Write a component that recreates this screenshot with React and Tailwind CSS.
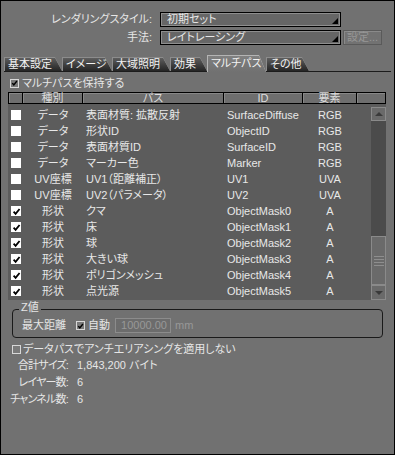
import React from "react";

const rows = [
  [false, "データ", "表面材質: 拡散反射", "SurfaceDiffuse", "RGB"],
  [false, "データ", "形状ID", "ObjectID", "RGB"],
  [false, "データ", "表面材質ID", "SurfaceID", "RGB"],
  [false, "データ", "マーカー色", "Marker", "RGB"],
  [false, "UV座標", "UV1（距離補正）", "UV1", "UVA"],
  [false, "UV座標", "UV2（パラメータ）", "UV2", "UVA"],
  [true, "形状", "クマ", "ObjectMask0", "A"],
  [true, "形状", "床", "ObjectMask1", "A"],
  [true, "形状", "球", "ObjectMask2", "A"],
  [true, "形状", "大きい球", "ObjectMask3", "A"],
  [true, "形状", "ポリゴンメッシュ", "ObjectMask4", "A"],
  [true, "形状", "点光源", "ObjectMask5", "A"],
];

const tabs = [
  { label: "基本設定", w: "w-[58px]" },
  { label: "イメージ", w: "w-[50px]" },
  { label: "大域照明", w: "w-[58px]" },
  { label: "効果", w: "w-[37px]" },
  { label: "マルチパス", w: "w-[59px]", active: true },
  { label: "その他", w: "w-[43px]" },
];

function Check({ className = "" }) {
  return (
    <svg viewBox="0 0 10 10" className={className}>
      <path d="M1.8 5.2 L4 7.6 L8.4 2.2" fill="none" stroke="#000" strokeWidth="2" />
    </svg>
  );
}

// small framed checkbox used outside the table
function Box({ checked }) {
  return (
    <div className="w-[9px] h-[9px] shrink-0 border border-[#d8d8d8] bg-[#7a7a7a] flex items-center justify-center">
      {checked && <Check className="w-[8px] h-[8px]" />}
    </div>
  );
}

function Select({ value }) {
  return (
    <div className="w-[181px] h-[15px] border border-black">
      <div className="h-full border border-[#8e8e8e] bg-[#666666] flex items-end justify-between pl-[5px] pr-[1px]">
        <span className="self-center leading-[11px]">{value}</span>
        <svg viewBox="0 0 6 6" className="w-[6px] h-[6px] mb-[1px]">
          <path d="M6 0 L6 6 L0 6 Z" fill="#000" />
        </svg>
      </div>
    </div>
  );
}

function Tab({ label, w, active }) {
  return (
    <div
      className={`${w} shrink-0 pt-px pl-px [clip-path:polygon(0_0,calc(100%_-_7px)_0,100%_100%,0_100%)] ${
        active ? "h-[17px] -mb-px bg-[#b4b4b4]" : "h-[14px] bg-[#8c8c8c]"
      }`}
    >
      <div
        className={`h-full pl-[3px] text-[#f2f2f2] [clip-path:polygon(0_0,calc(100%_-_7px)_0,100%_100%,0_100%)] ${
          active
            ? "bg-gradient-to-b from-[#808080] to-[#717171] leading-[14px]"
            : "bg-gradient-to-b from-[#5e5e5e] to-[#252525] leading-[13px]"
        }`}
      >
        {label}
      </div>
    </div>
  );
}

export default function App() {
  return (
    <div className="w-[395px] h-[455px] border border-black bg-[#717171] text-[#e6e6e6] text-[11px] font-['Liberation_Sans','Noto_Sans_CJK_JP',sans-serif] [font-feature-settings:'palt'] overflow-hidden">
      {/* rendering style */}
      <div className="flex items-center h-[15px] mt-[11px]">
        <div className="w-[151px] text-right">レンダリングスタイル:</div>
        <div className="ml-[8px]">
          <Select value="初期セット" />
        </div>
      </div>
      <div className="flex items-center h-[15px] mt-[3px]">
        <div className="w-[151px] text-right">手法:</div>
        <div className="ml-[8px]">
          <Select value="レイトレーシング" />
        </div>
        <div className="ml-[2px] w-[39px] h-[15px] border border-[#5a5a5a] bg-[#727272] shadow-[inset_1px_1px_0_#8a8a8a] text-[#969696] leading-[13px] pl-[3px]">
          設定...
        </div>
      </div>

      {/* tabs */}
      <div className="flex items-end h-[17px] mt-[10px] mx-[3px] border-b border-[#1c1c1c]">
        {tabs.map((t) => (
          <Tab key={t.label} {...t} />
        ))}
      </div>

      <div className="flex items-center h-[12px] mt-[5px] pl-[9px] gap-[3px]">
        <Box checked />
        <span>マルチパスを保持する</span>
      </div>

      {/* table */}
      <div className="mt-[3px] ml-[7px] w-[378px]">
        <div className="flex h-[12px] text-[#dcdcdc] leading-[10px] text-center">
          <div className="w-[15px] border border-black bg-[#6e6e6e] shadow-[inset_1px_1px_0_#888]" />
          <div className="w-[60px] border-y border-r border-black bg-[#6e6e6e] shadow-[inset_1px_1px_0_#888]">種別</div>
          <div className="w-[141px] border-y border-r border-black bg-[#6e6e6e] shadow-[inset_1px_1px_0_#888]">パス</div>
          <div className="w-[79px] border-y border-r border-black bg-[#6e6e6e] shadow-[inset_1px_1px_0_#888]">ID</div>
          <div className="w-[54px] border-y border-r border-black bg-[#6e6e6e] shadow-[inset_1px_1px_0_#888]">要素</div>
          <div className="w-[29px] border-y border-r border-black bg-[#6e6e6e] shadow-[inset_1px_1px_0_#888]" />
        </div>
        <div className="flex h-[196px] bg-[#5c5c5c] pt-[3px]">
          <div className="w-[363px]">
            {rows.map(([on, kind, path, id, el]) => (
              <div key={id} className="flex items-center h-[16px] text-[#e8e8e8]">
                <div className="w-[15px] flex justify-end pr-[2px]">
                  <div className="w-[10px] h-[10px] bg-white flex items-center justify-center">
                    {on && <Check className="w-[9px] h-[9px]" />}
                  </div>
                </div>
                <div className="w-[60px] text-center">{kind}</div>
                <div className="w-[141px] pl-[3px] whitespace-nowrap">{path}</div>
                <div className="w-[79px] pl-[3px]">{id}</div>
                <div className="w-[54px] text-center">{el}</div>
              </div>
            ))}
          </div>
          {/* scrollbar */}
          <div className="w-[15px] h-[193px] bg-[#4b4b4b] flex flex-col">
            <div className="h-[14px] border border-[#8a8a8a] bg-[#6a6a6a] flex items-center justify-center">
              <svg viewBox="0 0 8 4" className="w-[8px] h-[4px]">
                <path d="M0 4 L4 0 L8 4 Z" fill="#3a3a3a" />
              </svg>
            </div>
            <div className="flex-1" />
            <div className="h-[49px] border border-[#8a8a8a] bg-[#6a6a6a] flex flex-col items-center justify-center gap-[2px]">
              <div className="w-[10px] h-px bg-[#8e8e8e]" />
              <div className="w-[10px] h-px bg-[#8e8e8e]" />
              <div className="w-[10px] h-px bg-[#8e8e8e]" />
              <div className="w-[10px] h-px bg-[#8e8e8e]" />
            </div>
            <div className="h-[15px] border border-[#8a8a8a] bg-[#6a6a6a] flex items-center justify-center">
              <svg viewBox="0 0 8 4" className="w-[8px] h-[4px]">
                <path d="M0 0 L8 0 L4 4 Z" fill="#3a3a3a" />
              </svg>
            </div>
          </div>
        </div>
      </div>

      {/* Z value group */}
      <div className="mt-[9px] ml-[11px] w-[371px] border border-[#1a1a1a] rounded-[4px] pb-[4px]">
        <div className="-mt-[9px] ml-[6px] w-fit px-[2px] bg-[#717171] leading-[13px]">Z値</div>
        <div className="flex items-center h-[15px] mt-[4px] pl-[9px]">
          <span className="w-[54px]">最大距離</span>
          <Box checked />
          <span className="ml-[3px] w-[27px]">自動</span>
          <div className="w-[56px] h-[15px] border border-[#8c8c8c] bg-[#6c6c6c] text-[#989898] text-right pr-[3px] leading-[13px]">
            10000.00
          </div>
          <span className="ml-[4px] text-[#989898]">mm</span>
        </div>
      </div>

      <div className="flex items-center h-[12px] mt-[5px] pl-[11px] gap-[2px]">
        <Box />
        <span>データパスでアンチエリアシングを適用しない</span>
      </div>

      <div className="mt-[2px] flex flex-col">
        {[
          ["合計サイズ:", "1,843,200 バイト"],
          ["レイヤー数:", "6"],
          ["チャンネル数:", "6"],
        ].map(([k, v]) => (
          <div key={k} className="flex items-center h-[17px]">
            <span className="w-[67px] text-right tracking-[-0.8px]">{k}</span>
            <span className="ml-[9px]">{v}</span>
          </div>
        ))}
      </div>
    </div>
  );
}
